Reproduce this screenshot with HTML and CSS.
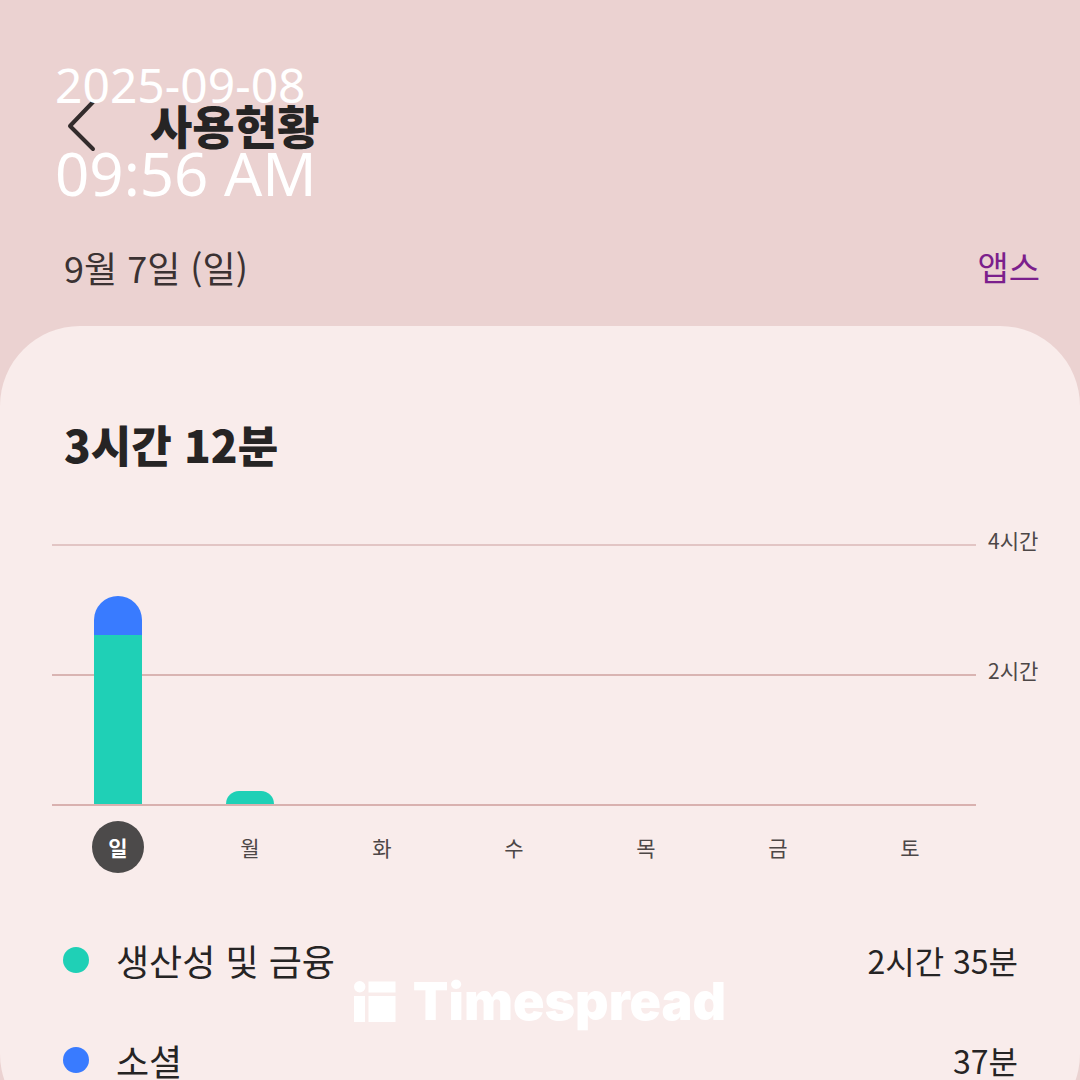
FILE: index.html
```html
<!doctype html>
<html lang="ko">
<head>
  <meta charset="utf-8" />
  <meta name="viewport" content="width=device-width, initial-scale=1.0" />
  <title>사용현황</title>
  <link rel="stylesheet" href="styles.css">
</head>
<body>
  <div class="screen">
    <header class="topbar">
      <button class="back" type="button" aria-label="뒤로">
        <svg width="30" height="52" viewBox="0 0 30 52" aria-hidden="true">
          <path d="M25 4 L2 28 L25 51" />
        </svg>
      </button>
      <h1>사용현황</h1>
    </header>

    <div class="date-row">
      <span>9월 7일 (일)</span>
      <a href="#apps">앱스</a>
    </div>

    <main class="card">
      <h2>3시간 12분</h2>

      <div class="chart">
        <div class="plot">
          <div class="gridline faint"></div>
          <div class="gridline"></div>
          <div class="bars">
            <div class="bar">
              <div class="social" style="height: 39px"></div>
              <div class="finance" style="height: 169px"></div>
            </div>
            <div class="bar short">
              <div class="finance" style="height: 13px"></div>
            </div>
          </div>
        </div>
        <div class="scale">
          <span>4시간</span>
          <span>2시간</span>
        </div>
        <div class="days">
          <span class="selected">일</span>
          <span>월</span>
          <span>화</span>
          <span>수</span>
          <span>목</span>
          <span>금</span>
          <span>토</span>
        </div>
      </div>

      <ul class="categories" id="apps">
        <li>
          <i class="dot finance"></i>
          <span class="name">생산성 및 금융</span>
          <span class="time">2시간 35분</span>
        </li>
        <li>
          <i class="dot social"></i>
          <span class="name">소셜</span>
          <span class="time">37분</span>
        </li>
      </ul>
    </main>

    <!-- timestamp and logo stamped over the screen -->
    <div class="stamp">
      <div class="stamp-date">2025-09-08</div>
      <div class="stamp-time">09:56 AM</div>
    </div>
    <div class="brand">
      <svg width="42" height="42" viewBox="0 0 42 42" aria-hidden="true">
        <circle cx="5.7" cy="5.7" r="5.7" />
        <rect x="14.5" y="0.5" width="27" height="11" />
        <rect x="0" y="15" width="11" height="26" />
        <rect x="14.5" y="15" width="27" height="26" />
      </svg>
      <span>Timespread</span>
    </div>
  </div>
</body>
</html>
```
FILE: styles.css
```css
* {
  box-sizing: border-box;
}
body {
  margin: 0;
  background: #ebd2d1;
  color: #262424;
  font-family: "Noto Sans CJK KR", sans-serif;
}
h1, h2, ul {
  margin: 0;
  padding: 0;
}
.screen {
  position: relative;
  height: 100vh;
  overflow: hidden;
}
.topbar {
  display: flex;
  align-items: center;
  gap: 52px;
  padding: 94px 40px 0 68px;
}
.back {
  display: flex;
  padding: 4px 0;
  border: 0;
  background: none;
  cursor: pointer;
}
.back svg {
  fill: none;
  stroke: #332c2c;
  stroke-width: 4;
  stroke-linecap: round;
  stroke-linejoin: round;
  overflow: visible;
}
h1 {
  font-size: 46px;
  line-height: 60px;
  font-weight: 900;
}
.date-row {
  display: flex;
  justify-content: space-between;
  align-items: center;
  padding: 88px 40px 34px 64px;
  font-size: 36px;
  line-height: 50px;
  color: #3b3233;
}
.date-row a {
  color: #7b1f8c;
  font-size: 34px;
  text-decoration: none;
}
.card {
  padding: 86px 40px 24px 52px;
  border-radius: 80px;
  background: #f9eceb;
}
h2 {
  padding-left: 12px;
  font-size: 44px;
  line-height: 64px;
  font-weight: 900;
}
.chart {
  display: grid;
  grid-template-columns: 1fr 52px;
  column-gap: 12px;
  padding-top: 68px;
}
.plot {
  position: relative;
  border-bottom: 2px solid #d9b1af;
}
.gridline {
  height: 130px;
  border-top: 2px solid #d9b4b2;
}
.gridline.faint {
  border-color: #e2c5c4;
}
.bars {
  position: absolute;
  inset: 0;
  display: grid;
  grid-template-columns: repeat(7, 1fr);
  align-items: end;
  justify-items: center;
}
.bar {
  width: 48px;
  overflow: hidden;
  border-radius: 24px 24px 0 0;
}
.bar.short {
  border-radius: 13px 13px 0 0;
}
.finance {
  background: #1fd0b6;
}
.social {
  background: #397bff;
}
.scale {
  margin-top: -16px;
  font-size: 21px;
  line-height: 24px;
  color: #4d4747;
}
.scale span {
  display: block;
  height: 130px;
}
.days {
  display: grid;
  grid-template-columns: repeat(7, 1fr);
  justify-items: center;
  padding-top: 15px;
  font-size: 21px;
  line-height: 52px;
  color: #4d4747;
}
.days .selected {
  width: 52px;
  border-radius: 50%;
  background: #4c4a4a;
  color: #fff;
  font-weight: 700;
  text-align: center;
}
.categories {
  padding: 37px 22px 0 11px;
  list-style: none;
}
.categories li {
  display: flex;
  align-items: center;
  height: 100px;
}
.dot {
  width: 26px;
  height: 26px;
  border-radius: 50%;
}
.name {
  flex: 1;
  padding-left: 27px;
  font-size: 36px;
}
.time {
  font-size: 32px;
}
.stamp {
  position: absolute;
  top: 55px;
  left: 55px;
  color: #fff;
  font-family: "Noto Sans", sans-serif;
}
.stamp-date {
  font-size: 48px;
  line-height: 60px;
}
.stamp-time {
  padding-top: 18px;
  font-size: 60px;
  line-height: 80px;
}
.brand {
  position: absolute;
  right: 0;
  bottom: 48px;
  left: 0;
  display: flex;
  justify-content: center;
  align-items: center;
  gap: 17px;
  color: #fff;
  font-family: Inter, sans-serif;
  font-size: 52px;
  line-height: 60px;
  font-weight: 900;
}
.brand svg {
  fill: #fff;
}
```
